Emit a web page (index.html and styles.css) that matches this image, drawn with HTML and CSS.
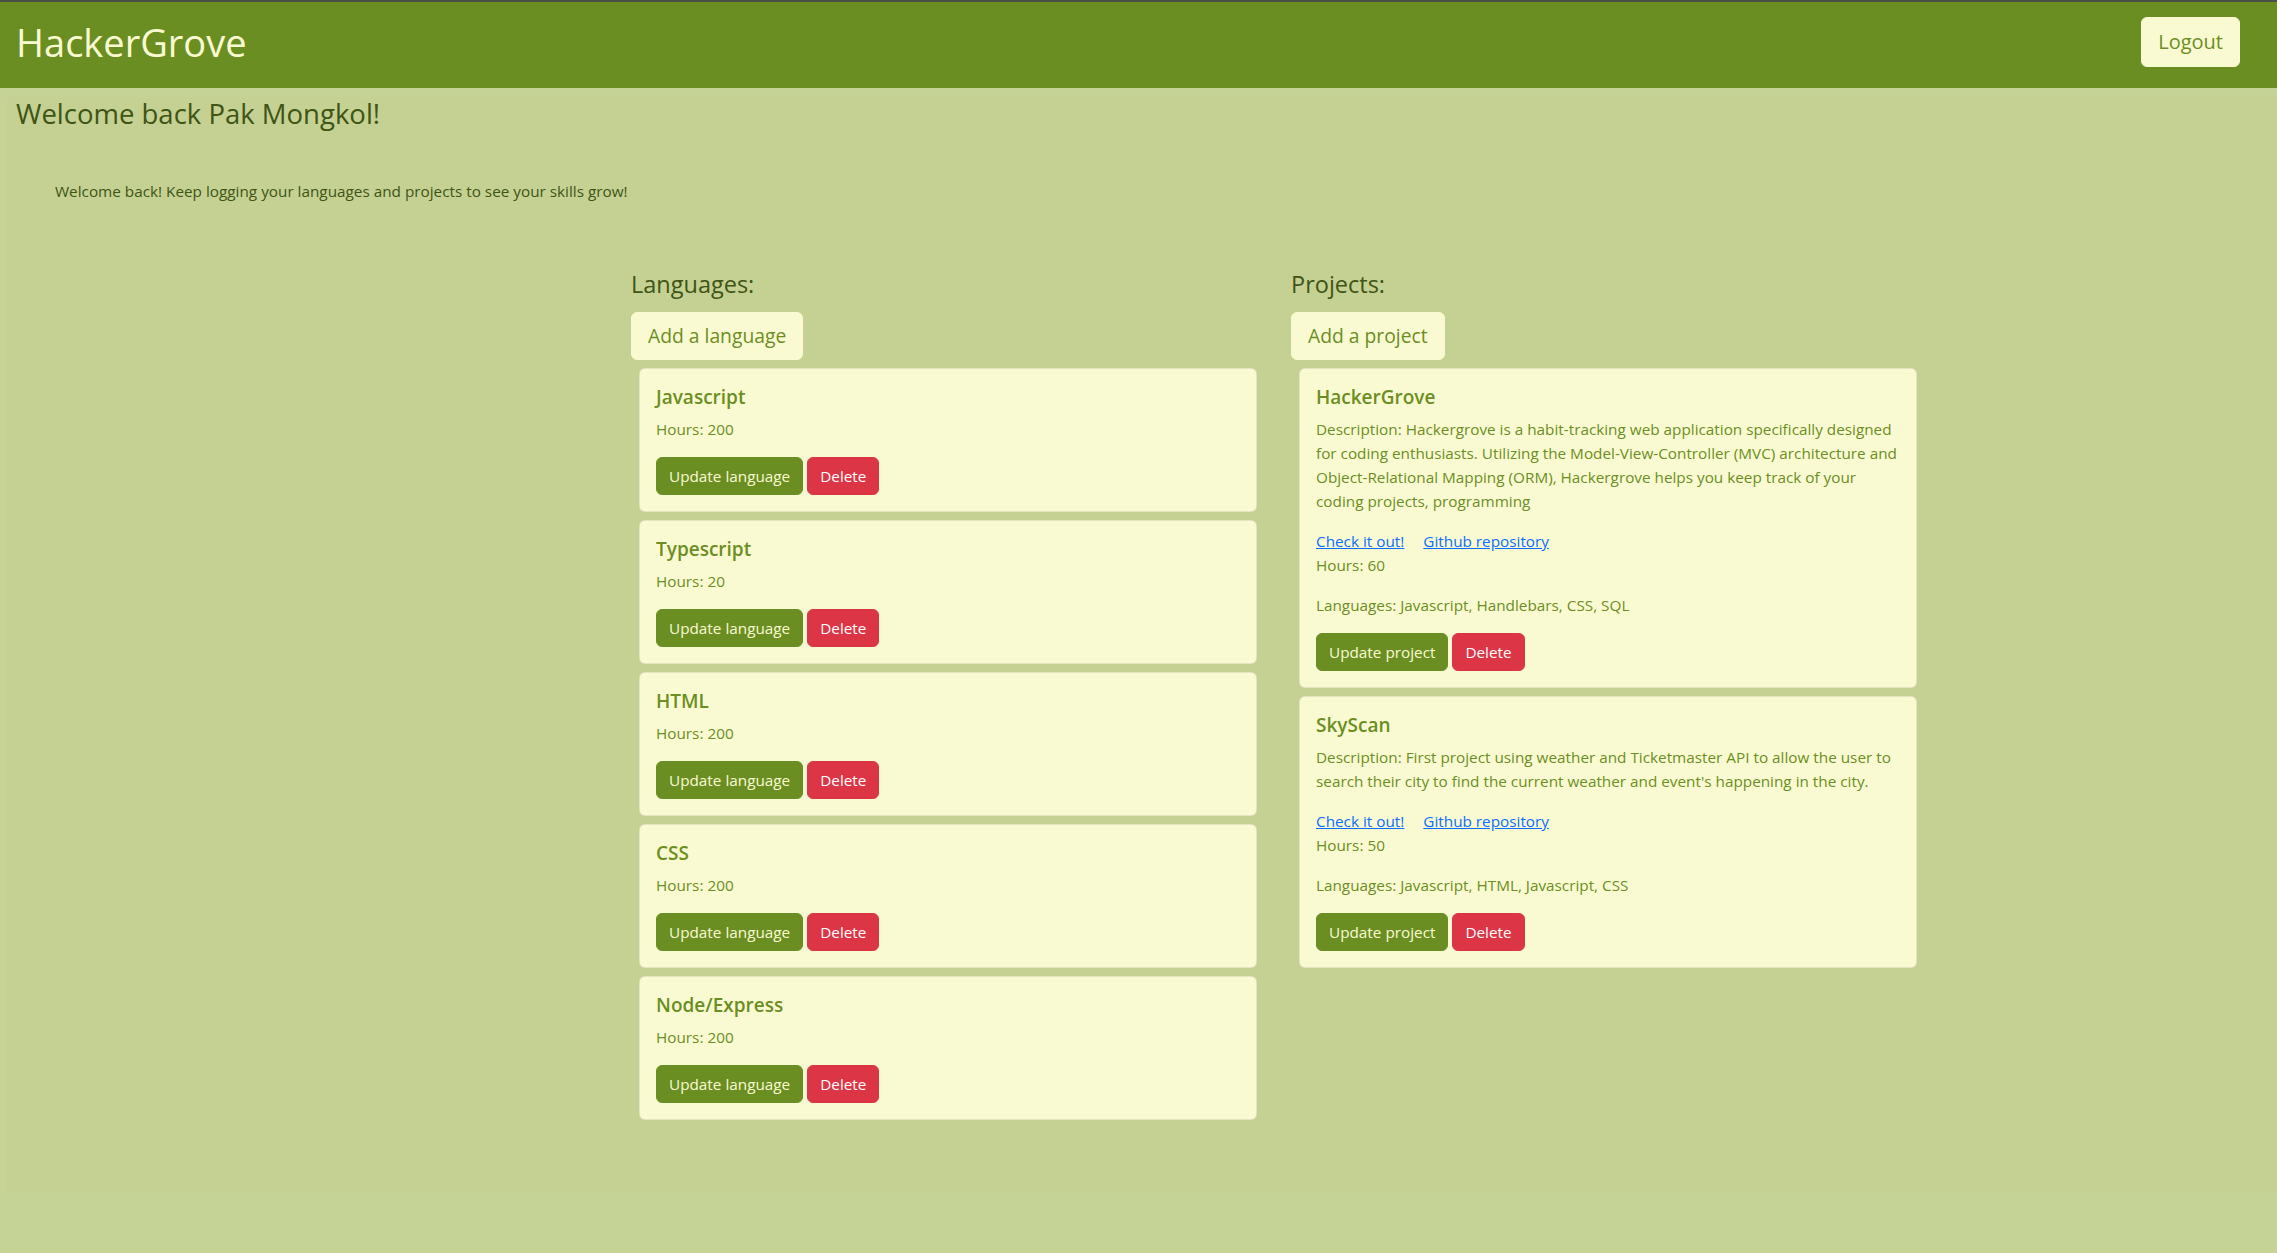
FILE: index.html
```html
<!DOCTYPE html>
<html lang="en">
<head>
<meta charset="utf-8">
<title>HackerGrove</title>
<link rel="stylesheet" href="styles.css">
</head>
<body>
<header class="topbar">
  <span class="brand">HackerGrove</span>
  <button class="btn btn-logout">Logout</button>
</header>
<main class="dash">
  <h3 class="welcome-title">Welcome back Pak Mongkol!</h3>
  <p class="welcome-text">Welcome back! Keep logging your languages and projects to see your skills grow!</p>
  <div class="columns">
    <section class="col">
      <h4 class="col-title">Languages:</h4>
      <button class="btn btn-add">Add a language</button>
      <div class="card">
        <h5 class="card-title">Javascript</h5>
        <p class="card-text">Hours: 200</p>
        <div class="actions"><button class="btn btn-update">Update language</button> <button class="btn btn-delete">Delete</button></div>
      </div>
      <div class="card">
        <h5 class="card-title">Typescript</h5>
        <p class="card-text">Hours: 20</p>
        <div class="actions"><button class="btn btn-update">Update language</button> <button class="btn btn-delete">Delete</button></div>
      </div>
      <div class="card">
        <h5 class="card-title">HTML</h5>
        <p class="card-text">Hours: 200</p>
        <div class="actions"><button class="btn btn-update">Update language</button> <button class="btn btn-delete">Delete</button></div>
      </div>
      <div class="card">
        <h5 class="card-title">CSS</h5>
        <p class="card-text">Hours: 200</p>
        <div class="actions"><button class="btn btn-update">Update language</button> <button class="btn btn-delete">Delete</button></div>
      </div>
      <div class="card">
        <h5 class="card-title">Node/Express</h5>
        <p class="card-text">Hours: 200</p>
        <div class="actions"><button class="btn btn-update">Update language</button> <button class="btn btn-delete">Delete</button></div>
      </div>
    </section>
    <section class="col">
      <h4 class="col-title">Projects:</h4>
      <button class="btn btn-add">Add a project</button>
      <div class="card">
        <h5 class="card-title">HackerGrove</h5>
        <p class="card-text">Description: Hackergrove is a habit-tracking web application specifically designed for coding enthusiasts. Utilizing the Model-View-Controller (MVC) architecture and Object-Relational Mapping (ORM), Hackergrove helps you keep track of your coding projects, programming</p>
        <div class="links"><a href="#">Check it out!</a><a href="#">Github repository</a></div>
        <p class="card-text">Hours: 60</p>
        <p class="card-text">Languages: Javascript, Handlebars, CSS, SQL</p>
        <div class="actions"><button class="btn btn-update">Update project</button> <button class="btn btn-delete">Delete</button></div>
      </div>
      <div class="card">
        <h5 class="card-title">SkyScan</h5>
        <p class="card-text">Description: First project using weather and Ticketmaster API to allow the user to search their city to find the current weather and event's happening in the city.</p>
        <div class="links"><a href="#">Check it out!</a><a href="#">Github repository</a></div>
        <p class="card-text">Hours: 50</p>
        <p class="card-text">Languages: Javascript, HTML, Javascript, CSS</p>
        <div class="actions"><button class="btn btn-update">Update project</button> <button class="btn btn-delete">Delete</button></div>
      </div>
    </section>
  </div>
</main>
</body>
</html>
```
FILE: styles.css
```css
* { box-sizing: border-box; }

body {
  margin: 0;
  background: #c6d396;
  font-family: "Open Sans", "Noto Sans", sans-serif;
  font-size: 15.3px;
  line-height: 24px;
  color: #6b8e23;
}

.topbar {
  display: flex;
  justify-content: space-between;
  align-items: flex-start;
  height: 88px;
  border-top: 2px solid #4b4d48;
  background: #6b8e23;
  padding: 15px 37px 0 16px;
}

.brand {
  font-size: 38px;
  line-height: 48px;
  margin-top: 1px;
  color: #fafad2;
}

.btn {
  font-family: inherit;
  font-size: 15.3px;
  line-height: 24px;
  padding: 6px 12px;
  border: 1px solid transparent;
  border-radius: 6px;
  cursor: pointer;
}

.btn-logout {
  font-size: 20px;
  line-height: 30px;
  padding: 9px 16px;
  background: #fafad2;
  color: #6b8e23;
  border-color: #fafad2;
}

.dash {
  margin: 9px 0 0 7px;
  padding: 0 0 72px 9px;
  background: #c4d192;
}

.welcome-title {
  margin: 0;
  font-size: 27.5px;
  line-height: 34px;
  font-weight: 400;
  color: #3f5415;
}

.welcome-text {
  margin: 48px 0 0;
  padding-left: 39px;
  color: #3f5415;
}

.columns {
  display: flex;
  margin: 67px 0 0 615px;
}

.col {
  width: 660px;
  display: flex;
  flex-direction: column;
  align-items: flex-start;
}

.col-title {
  margin: 0 0 13px;
  font-size: 23.5px;
  line-height: 29px;
  font-weight: 400;
  color: #3f5415;
}

.btn-add {
  font-size: 19.3px;
  line-height: 30px;
  padding: 8px 16px;
  background: #fafad2;
  color: #6b8e23;
  border-color: #fafad2;
}

.card {
  width: 618px;
  margin: 8px 0 0 8px;
  padding: 16px;
  background: #fafad2;
  border: 1px solid rgba(0, 0, 0, 0.09);
  border-radius: 6px;
}

.card-title {
  margin: 0 0 8px;
  font-size: 19px;
  line-height: 24px;
  font-weight: 600;
  color: #6b8e23;
}

.card-text {
  margin: 0 0 16px;
  color: #6b8e23;
}

.links a {
  color: #0d6efd;
  text-decoration: underline;
  margin-right: 19px;
}

.btn-update {
  background: #6b8e23;
  border-color: #6b8e23;
  color: #fafad2;
}

.btn-delete {
  background: #dc3545;
  border-color: #dc3545;
  color: #fff;
}
```
